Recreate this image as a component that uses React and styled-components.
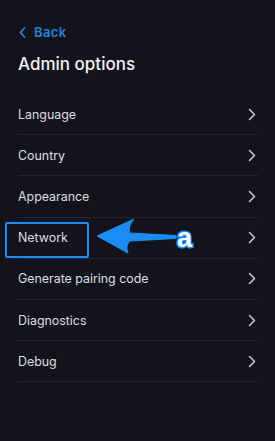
import React from "react";
import styled, { createGlobalStyle } from "styled-components";

const items = [
  "Language",
  "Country",
  "Appearance",
  "Network",
  "Generate pairing code",
  "Diagnostics",
  "Debug",
];

const App = () => {
  return (
    <Screen>
      <GlobalStyle />
      <BackLink>
        <svg width="7" height="11" viewBox="0 0 7 11">
          <path
            d="M5.5 1 L1.5 5.5 L5.5 10"
            fill="none"
            stroke="currentColor"
            strokeWidth="1.8"
            strokeLinecap="round"
            strokeLinejoin="round"
          />
        </svg>
        Back
      </BackLink>
      <Title>Admin options</Title>
      <List>
        {items.map((item) => (
          <Row key={item}>
            <Label>{item}</Label>
            <Chevron />
            {item === "Network" && <Highlight />}
          </Row>
        ))}
      </List>
      <Annotation width="275" height="441" viewBox="0 0 275 441">
        <path
          d="M97 236 L134 219 Q127 228 130 233 L176 235.5 L176 238.5 L130 241 Q125 246 128 253 Z"
          fill="#1b8cf2"
          stroke="#1b8cf2"
          strokeWidth="1"
          strokeLinejoin="round"
        />
        <text
          x="177"
          y="247"
          fontFamily="'Liberation Sans', Arial, sans-serif"
          fontWeight="700"
          fontSize="27"
          fill="#ffffff"
          stroke="#1b8cf2"
          strokeWidth="3"
          paintOrder="stroke"
        >
          a
        </text>
      </Annotation>
    </Screen>
  );
};

const Chevron = () => (
  <ChevronIcon width="8" height="13" viewBox="0 0 8 13">
    <path
      d="M1.5 1.5 L6.5 6.5 L1.5 11.5"
      fill="none"
      stroke="currentColor"
      strokeWidth="1.6"
      strokeLinecap="round"
      strokeLinejoin="round"
    />
  </ChevronIcon>
);

export default App;

const GlobalStyle = createGlobalStyle`
  html, body {
    margin: 0;
    padding: 0;
    background: #13141b;
  }
  * {
    box-sizing: border-box;
  }
`;

const Screen = styled.div`
  position: relative;
  width: 275px;
  height: 441px;
  overflow: hidden;
  background: #13141b;
  font-family: Inter, "Noto Sans", sans-serif;
  padding: 23px 17px 0 18px;
  display: flex;
  flex-direction: column;
`;

const BackLink = styled.div`
  display: flex;
  align-items: center;
  gap: 8px;
  color: #2485d8;
  font-size: 13px;
  font-weight: 600;
  letter-spacing: 0.4px;
  height: 18px;
  padding-left: 1px;
`;

const Title = styled.h1`
  margin: 12px 0 0;
  color: #f2f2f4;
  font-size: 17px;
  font-weight: 500;
  line-height: 22px;
`;

const List = styled.div`
  margin-top: 19px;
  display: flex;
  flex-direction: column;
`;

const Row = styled.div`
  position: relative;
  height: 41.2px;
  display: flex;
  align-items: center;
  justify-content: space-between;
  border-bottom: 1px solid #24252d;
  padding-right: 2px;
`;

const Label = styled.span`
  color: #dedee2;
  font-size: 12.4px;
  font-weight: 400;
`;

const ChevronIcon = styled.svg`
  color: #c4c4ca;
`;

const Highlight = styled.div`
  position: absolute;
  left: -13px;
  top: 4px;
  width: 84px;
  height: 36px;
  border: 2.5px solid #1b8cf2;
  border-radius: 2px;
`;

const Annotation = styled.svg`
  position: absolute;
  left: 0;
  top: 0;
  pointer-events: none;
`;
